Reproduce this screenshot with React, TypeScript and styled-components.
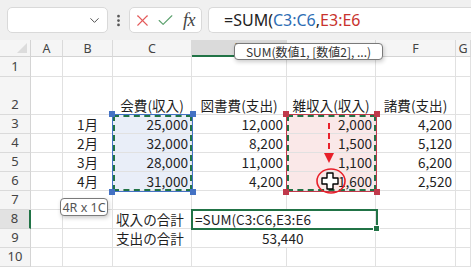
import React from "react";
import styled, { createGlobalStyle } from "styled-components";
import { ChevronDown, EllipsisVertical, X, Check } from "lucide-react";

const GlobalStyle = createGlobalStyle`
  html, body {
    margin: 0;
    padding: 0;
    background: #ffffff;
  }
  body {
    font-family: "Noto Sans", "Noto Sans CJK JP", sans-serif;
  }
`;

const COLS = [31, 32, 50, 79, 95, 89, 80];
const ROWS = [17, 20, 38, 19, 19, 19, 19, 19, 19, 19, 19];
const LETTERS = ["A", "B", "C", "D", "E", "F", "G"];

const Page = styled.div`
  width: 471px;
  height: 267px;
  overflow: hidden;
  display: flex;
  flex-direction: column;
`;

const Toolbar = styled.div`
  height: 40px;
  flex: none;
  background: #f0f0f0;
  display: flex;
  align-items: center;
  padding-left: 7px;
  box-sizing: border-box;
`;

const Box = styled.div`
  height: 26px;
  box-sizing: border-box;
  background: #ffffff;
  border: 1px solid #d9d9d9;
  border-radius: 5px;
  display: flex;
  align-items: center;
`;

const NameBox = styled(Box)`
  width: 101px;
  justify-content: flex-end;
  padding-right: 5px;
  color: #505050;
`;

const Dots = styled.div`
  width: 21px;
  display: flex;
  justify-content: center;
  color: #555;
`;

const FxBox = styled(Box)`
  width: 73px;
  padding-left: 3px;
  gap: 4px;
`;

const Fx = styled.span`
  font-family: "Liberation Serif", serif;
  font-style: italic;
  font-size: 18px;
  color: #444;
  margin-left: 4px;
  letter-spacing: -0.5px;
`;

const FormulaBox = styled(Box)`
  flex: 1;
  margin-left: 6px;
  border-right: none;
  border-radius: 5px 0 0 5px;
  padding-left: 15px;
  font-size: 16px;
  color: #222;
  white-space: nowrap;
`;

const Ref = styled.span<{ $color: string }>`
  color: ${(p) => p.$color};
`;

const Sheet = styled.div`
  position: relative;
  flex: 1;
  background: #ffffff;
  display: grid;
  grid-template-columns: ${COLS.map((c) => c + "px").join(" ")} 1fr;
  grid-template-rows: ${ROWS.map((r) => r + "px").join(" ")};
`;

const Corner = styled.div`
  background: #f5f5f5;
  border-right: 1px solid #d4d4d4;
  border-bottom: 1px solid #d4d4d4;
  position: relative;
  &::after {
    content: "";
    position: absolute;
    right: 3px;
    bottom: 3px;
    border-style: solid;
    border-width: 0 0 10px 10px;
    border-color: transparent transparent #dcdcdc transparent;
  }
`;

const ColHead = styled.div<{ $active?: boolean }>`
  background: ${(p) => (p.$active ? "#dadada" : "#f5f5f5")};
  border-right: 1px solid #dadada;
  border-bottom: ${(p) => (p.$active ? "2px solid #217346" : "1px solid #d4d4d4")};
  box-sizing: border-box;
  display: flex;
  align-items: center;
  justify-content: center;
  font-size: 12.5px;
  color: #444;
`;

const RowHead = styled.div<{ $active?: boolean }>`
  background: ${(p) => (p.$active ? "#e2e2e2" : "#f5f5f5")};
  border-bottom: 1px solid #dadada;
  border-right: ${(p) => (p.$active ? "2px solid #217346" : "1px solid #d4d4d4")};
  box-sizing: border-box;
  display: flex;
  align-items: flex-end;
  justify-content: center;
  padding-bottom: 1px;
  font-size: 13px;
  color: #444;
`;

const Cell = styled.div<{ $align?: string; $fill?: string; $indent?: number; $spill?: boolean }>`
  background: ${(p) => p.$fill || "transparent"};
  border-right: ${(p) => (p.$spill ? "none" : "1px solid #e1e1e1")};
  border-bottom: 1px solid #e1e1e1;
  box-sizing: border-box;
  display: flex;
  align-items: flex-end;
  justify-content: ${(p) =>
    p.$align === "right" ? "flex-end" : p.$align === "center" ? "center" : "flex-start"};
  padding: 0 3px 0 ${(p) => 3 + (p.$indent || 0)}px;
  font-family: "Noto Sans CJK JP", "Noto Sans", sans-serif;
  font-size: 13.6px;
  line-height: 18px;
  color: #1f1f1f;
  white-space: nowrap;
  overflow: visible;
  min-width: 0;
  position: relative;
  z-index: ${(p) => (p.$spill ? 2 : 1)};
`;

const Range = styled.div<{ $edge: string }>`
  position: absolute;
  box-sizing: border-box;
  border: 1px solid ${(p) => p.$edge};
  z-index: 3;
  pointer-events: none;
  &::before {
    content: "";
    position: absolute;
    inset: 0;
    border: 2px dashed #217346;
  }
`;

const Handle = styled.span<{ $edge: string; $x: string; $y: string }>`
  position: absolute;
  width: 6px;
  height: 6px;
  background: ${(p) => p.$edge};
  ${(p) => p.$x}: -4px;
  ${(p) => p.$y}: -4px;
`;

const ActiveCell = styled.div`
  position: absolute;
  left: 191px;
  top: 169px;
  width: 187px;
  height: 21px;
  box-sizing: border-box;
  border: 2px solid #217346;
  z-index: 3;
  &::after {
    content: "";
    position: absolute;
    right: -4px;
    bottom: -4px;
    width: 5px;
    height: 5px;
    background: #217346;
    border: 1px solid #ffffff;
  }
`;

const Tip = styled.div`
  position: absolute;
  z-index: 5;
  box-sizing: border-box;
  background: #ffffff;
  border: 1px solid #7a7a7a;
  border-radius: 4px;
  box-shadow: 1px 2px 4px rgba(0, 0, 0, 0.2);
  font-family: "Noto Sans CJK JP", "Noto Sans", sans-serif;
  font-size: 12px;
  color: #333;
  display: flex;
  align-items: center;
  justify-content: center;
  white-space: nowrap;
  overflow: hidden;
`;

const FnTip = styled(Tip)`
  left: 234px;
  top: 3px;
  width: 149px;
  height: 17px;
`;

const SizeTip = styled(Tip)`
  left: 60px;
  top: 158px;
  width: 48px;
  height: 18px;
  color: #555;
  font-family: "Noto Sans", sans-serif;
  font-size: 12.5px;
`;

const Marks = styled.svg`
  position: absolute;
  left: 300px;
  top: 75px;
  z-index: 6;
  overflow: visible;
`;

type CellData = { text: string; align?: string; indent?: number; spill?: boolean };
type Row = { cells: { [col: number]: CellData } };

const n = (text: string) => ({ text, align: "right" });
const c = (text: string) => ({ text, align: "center" });

const rows: Row[] = [
  { cells: {} },
  { cells: { 3: c("会費(収入)"), 4: c("図書費(支出)"), 5: c("雑収入(収入)"), 6: c("諸費(支出)") } },
  { cells: { 2: c("1月"), 3: n("25,000"), 4: n("12,000"), 5: n("2,000"), 6: n("4,200") } },
  { cells: { 2: c("2月"), 3: n("32,000"), 4: n("8,200"), 5: n("1,500"), 6: n("5,120") } },
  { cells: { 2: c("3月"), 3: n("28,000"), 4: n("11,000"), 5: n("1,100"), 6: n("6,200") } },
  { cells: { 2: c("4月"), 3: n("31,000"), 4: n("4,200"), 5: n("1,600"), 6: n("2,520") } },
  { cells: {} },
  { cells: { 3: { text: "収入の合計" }, 4: { text: "=SUM(C3:C6,E3:E6", spill: true } } },
  { cells: { 3: { text: "支出の合計" }, 4: { text: "53,440", indent: 67, spill: true } } },
  { cells: {} },
];

function fillFor(r: number, col: number) {
  if (r >= 2 && r <= 5 && col === 3) return "#e9eef8";
  if (r >= 2 && r <= 5 && col === 5) return "#fae8e8";
  return undefined;
}

function Corners({ edge }: { edge: string }) {
  return (
    <>
      <Handle $edge={edge} $x="left" $y="top" />
      <Handle $edge={edge} $x="right" $y="top" />
      <Handle $edge={edge} $x="left" $y="bottom" />
      <Handle $edge={edge} $x="right" $y="bottom" />
    </>
  );
}

export default function App() {
  return (
    <Page>
      <GlobalStyle />
      <Toolbar>
        <NameBox>
          <ChevronDown size={15} strokeWidth={1.6} />
        </NameBox>
        <Dots>
          <EllipsisVertical size={15} strokeWidth={2.4} />
        </Dots>
        <FxBox>
          <X size={19} color="#e35a5a" strokeWidth={1.4} />
          <Check size={19} color="#5aa06c" strokeWidth={1.4} />
          <Fx>fx</Fx>
        </FxBox>
        <FormulaBox>
          =SUM(<Ref $color="#2e6db4">C3:C6</Ref>,<Ref $color="#c8322e">E3:E6</Ref>
        </FormulaBox>
      </Toolbar>

      <Sheet>
        <Corner />
        {LETTERS.map((l, i) => (
          <ColHead key={l} $active={i === 3}>
            {l}
          </ColHead>
        ))}
        {rows.map((row, r) => (
          <React.Fragment key={r}>
            <RowHead $active={r === 7}>{r + 1}</RowHead>
            {[1, 2, 3, 4, 5, 6, 7].map((col) => {
              const cell = row.cells[col];
              return (
                <Cell
                  key={col}
                  $align={cell?.align}
                  $indent={cell?.indent}
                  $spill={cell?.spill}
                  $fill={fillFor(r, col)}
                >
                  {cell?.text}
                </Cell>
              );
            })}
          </React.Fragment>
        ))}

        <Range $edge="#4472c4" style={{ left: 112, top: 74, width: 81, height: 78 }}>
          <Corners edge="#4472c4" />
        </Range>
        <Range $edge="#c0394b" style={{ left: 286, top: 74, width: 91, height: 78 }}>
          <Corners edge="#c0394b" />
        </Range>
        <ActiveCell />

        <FnTip>SUM(数値1, [数値2], ...)</FnTip>
        <SizeTip>4R x 1C</SizeTip>

        <Marks width="60" height="90">
          {/* dashed arrow */}
          <line x1="29" y1="8" x2="29" y2="38" stroke="#e8202a" strokeWidth="2" strokeDasharray="6 4" />
          <polygon points="24,38 34,38 29,48" fill="#e8202a" />
          {/* circle */}
          <ellipse cx="31" cy="66" rx="14" ry="12" fill="none" stroke="#e8202a" strokeWidth="1.6" />
          {/* fat cross cursor */}
          <path
            d="M27 58 h6 v5 h5 v6 h-5 v5 h-6 v-5 h-5 v-6 h5 z"
            fill="#ffffff"
            stroke="#000000"
            strokeWidth="1.4"
            strokeLinejoin="round"
          />
        </Marks>
      </Sheet>
    </Page>
  );
}
